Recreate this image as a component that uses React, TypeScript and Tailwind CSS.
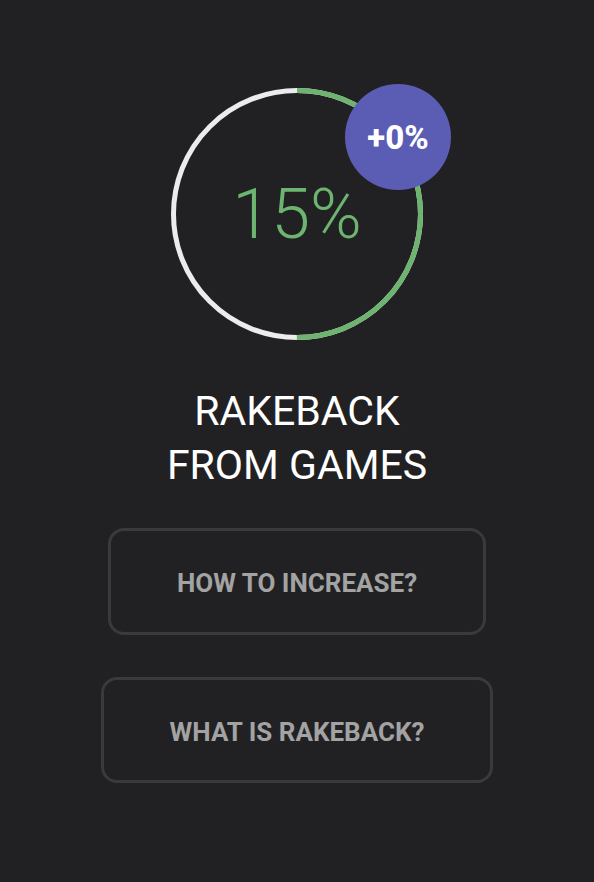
import React from "react";

export default function App() {
  const r = 123.5;
  const c = 2 * Math.PI * r;
  return (
    <div
      className="w-[594px] h-[882px] bg-[#212123] flex flex-col items-center"
      style={{ fontFamily: "Roboto, 'Liberation Sans', sans-serif" }}
    >
      <div className="relative mt-[88px] w-[252px] h-[252px]">
        <svg width="252" height="252" viewBox="0 0 252 252" className="absolute inset-0">
          <circle cx="126" cy="126" r={r} fill="none" stroke="#ececec" strokeWidth="5" />
          <circle
            cx="126"
            cy="126"
            r={r}
            fill="none"
            stroke="#6cb46f"
            strokeWidth="5"
            strokeDasharray={`${c / 2} ${c}`}
            transform="rotate(-90 126 126)"
          />
        </svg>
        <div className="absolute inset-0 flex items-center justify-center">
          <span className="text-[70px] font-light text-[#6cb46f] leading-none">15%</span>
        </div>
        <div className="absolute left-[174px] top-[-4px] w-[106px] h-[106px] rounded-full bg-[#5b5db5] flex items-center justify-center">
          <span className="text-[33px] font-extrabold text-white leading-none">+0%</span>
        </div>
      </div>
      <div className="mt-[44px] text-center text-white text-[41px] leading-[54px] font-normal">
        <div>RAKEBACK</div>
        <div>FROM GAMES</div>
      </div>
      <div className="mt-[36px] flex flex-col items-center gap-[42px]">
        <button className="h-[107px] pt-[4px] px-[66px] rounded-[16px] border-[3px] border-[#3a3a3c] text-[#a3a3a3] text-[26px] font-bold">
          HOW TO INCREASE?
        </button>
        <button className="h-[106px] pt-[4px] px-[66px] rounded-[16px] border-[3px] border-[#3a3a3c] text-[#a3a3a3] text-[26px] font-bold">
          WHAT IS RAKEBACK?
        </button>
      </div>
    </div>
  );
}
